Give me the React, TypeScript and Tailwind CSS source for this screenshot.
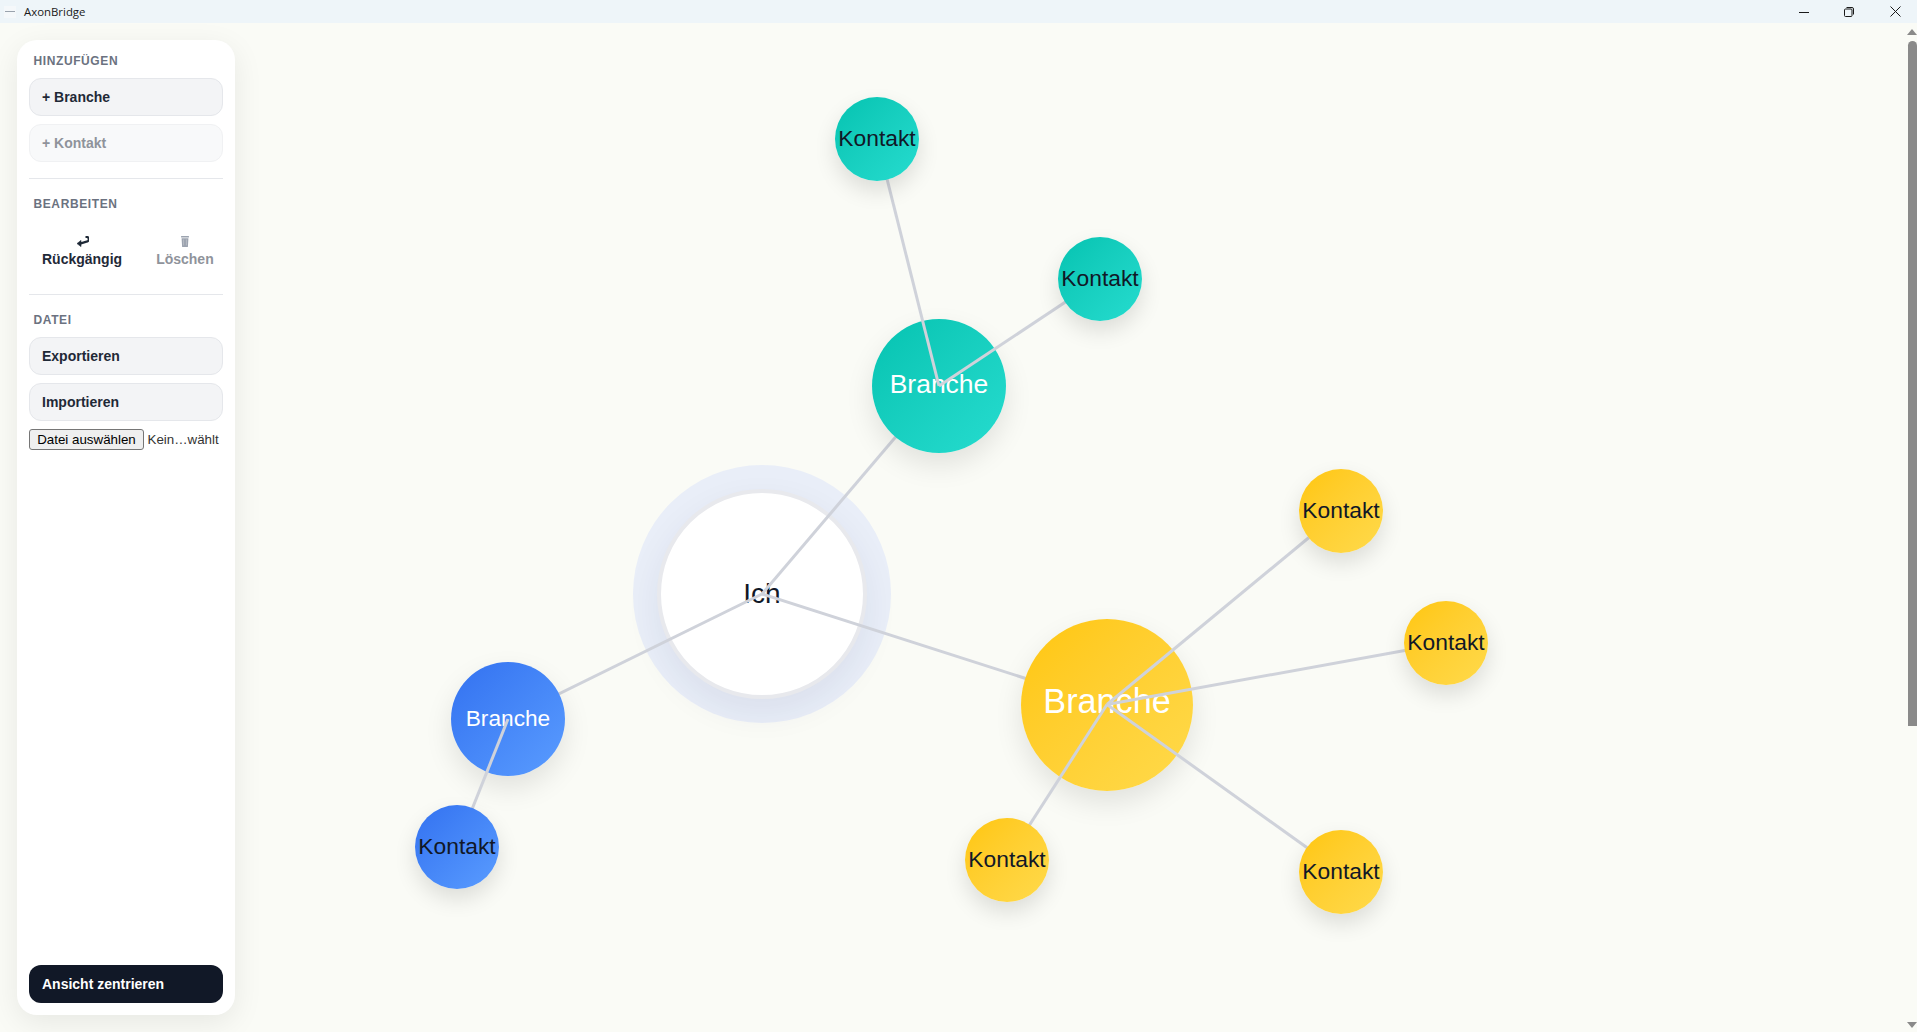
const FONT = "font-['Liberation_Sans',Arial,sans-serif]";

type Kind = "ich" | "branche" | "kontakt";
type Tint = "teal" | "yellow" | "blue";

interface GraphNode {
  id: string;
  label: string;
  kind: Kind;
  tint?: Tint;
  x: number;
  y: number;
  size: number;
  fontSize: number;
  lift: number;
}

const nodes: GraphNode[] = [
  { id: "ich", label: "Ich", kind: "ich", x: 762, y: 594, size: 210, fontSize: 28, lift: 0 },
  { id: "b1", label: "Branche", kind: "branche", tint: "teal", x: 939, y: 386, size: 134, fontSize: 26.5, lift: 2 },
  { id: "b2", label: "Branche", kind: "branche", tint: "yellow", x: 1107, y: 704.5, size: 172, fontSize: 34.2, lift: 6 },
  { id: "b3", label: "Branche", kind: "branche", tint: "blue", x: 508, y: 719, size: 114, fontSize: 22.7, lift: 1 },
  { id: "k1", label: "Kontakt", kind: "kontakt", tint: "teal", x: 877, y: 139, size: 84, fontSize: 22.8, lift: 1 },
  { id: "k2", label: "Kontakt", kind: "kontakt", tint: "teal", x: 1100, y: 279, size: 84, fontSize: 22.8, lift: 1 },
  { id: "k3", label: "Kontakt", kind: "kontakt", tint: "yellow", x: 1341, y: 511, size: 84, fontSize: 22.8, lift: 1 },
  { id: "k4", label: "Kontakt", kind: "kontakt", tint: "yellow", x: 1446, y: 643, size: 84, fontSize: 22.8, lift: 1 },
  { id: "k5", label: "Kontakt", kind: "kontakt", tint: "yellow", x: 1007, y: 860, size: 84, fontSize: 22.8, lift: 1 },
  { id: "k6", label: "Kontakt", kind: "kontakt", tint: "yellow", x: 1341, y: 872, size: 84, fontSize: 22.8, lift: 1 },
  { id: "k7", label: "Kontakt", kind: "kontakt", tint: "blue", x: 457, y: 847, size: 84, fontSize: 22.8, lift: 1 },
];

const branchEdges = [
  ["ich", "b1"],
  ["ich", "b2"],
  ["ich", "b3"],
];

const contactEdges = [
  ["b1", "k1"],
  ["b1", "k2"],
  ["b2", "k3"],
  ["b2", "k4"],
  ["b2", "k5"],
  ["b2", "k6"],
  ["b3", "k7"],
];

const tintClass: Record<Tint, string> = {
  teal: "bg-gradient-to-br from-[#03c3b1] to-[#25dccf]",
  yellow: "bg-gradient-to-br from-[#ffc606] to-[#ffda4a]",
  blue: "bg-gradient-to-br from-[#3371f0] to-[#5a9cff]",
};

function byId(id: string) {
  return nodes.find((n) => n.id === id)!;
}

function EdgeLayer({ edges, layer }: { edges: string[][]; layer: string }) {
  return (
    <svg className={`absolute inset-0 h-full w-full ${layer}`}>
      {edges.map(([a, b]) => (
        <line
          key={a + b}
          x1={byId(a).x}
          y1={byId(a).y}
          x2={byId(b).x}
          y2={byId(b).y}
          stroke="#cfd2da"
          strokeWidth={3}
        />
      ))}
    </svg>
  );
}

function NodeBubble({ node, layer }: { node: GraphNode; layer: string }) {
  const look =
    node.kind === "ich"
      ? "bg-white border-[4px] border-[#e8e9ed] text-[#111827] shadow-[0_14px_34px_rgba(30,41,80,0.07),0_0_0_24px_#e9eef8]"
      : node.kind === "branche"
        ? `${tintClass[node.tint!]} text-white shadow-[0_12px_28px_rgba(0,0,0,0.10)]`
        : `${tintClass[node.tint!]} text-[#111827] shadow-[0_10px_22px_rgba(0,0,0,0.12)]`;

  return (
    <div
      className={`absolute flex items-center justify-center rounded-full ${layer} ${look}`}
      style={{
        left: node.x - node.size / 2,
        top: node.y - node.size / 2,
        width: node.size,
        height: node.size,
        fontSize: node.fontSize,
        paddingBottom: node.lift,
      }}
    >
      {node.label}
    </div>
  );
}

function SectionLabel({ children }: { children: string }) {
  return (
    <div className="mb-[9px] pl-[4.5px] text-[12px] leading-4 font-bold tracking-[0.6px] text-[#6b7280] uppercase">
      {children}
    </div>
  );
}

function SideButton({ children, disabled }: { children: string; disabled?: boolean }) {
  return (
    <button
      className={`h-[38px] w-full rounded-xl border px-[12px] text-left text-[14px] font-bold ${
        disabled
          ? "border-[#f0f1f3] bg-[#f8f9fa] text-[#8f939b]"
          : "border-[#e5e7eb] bg-[#f3f4f6] text-[#1f2937]"
      }`}
    >
      {children}
    </button>
  );
}

function TitleBar() {
  return (
    <div className="flex h-[23px] flex-none items-center bg-[#eef5f9]">
      <div className="ml-[4px] flex h-[12px] w-[12px] items-center justify-center bg-[#f5f8fa]">
        <div className="h-px w-[10px] bg-[#9aa3ad]" />
      </div>
      <span className="ml-[8px] font-['Open_Sans',sans-serif] text-[11.4px] text-[#1a1a1a]">AxonBridge</span>
      <div className="ml-auto flex items-center">
        <svg width="10" height="10" viewBox="0 0 10 10" className="mr-[35px]" stroke="#1a1a1a" fill="none">
          <path d="M0 5.5h10" />
        </svg>
        <svg width="10" height="10" viewBox="0 0 10 10" className="mr-[36px]" stroke="#1a1a1a" fill="none">
          <rect x="0.5" y="2" width="7.5" height="7.5" rx="1" />
          <path d="M2.5 0.5h5.5a1.5 1.5 0 0 1 1.5 1.5v5.5" />
        </svg>
        <svg width="11" height="11" viewBox="0 0 11 11" className="mr-[16px]" stroke="#1a1a1a" fill="none">
          <path d="M0.5 0.5l10 10M10.5 0.5l-10 10" />
        </svg>
      </div>
    </div>
  );
}

function Sidebar() {
  return (
    <aside className="relative z-[60] ml-[17px] flex h-[975px] w-[218px] flex-col rounded-[20px] bg-white px-[12px] pt-[13px] pb-[12px] shadow-[0_8px_30px_rgba(0,0,0,0.08)]">
      <SectionLabel>Hinzufügen</SectionLabel>
      <div className="flex flex-col gap-2">
        <SideButton>+ Branche</SideButton>
        <SideButton disabled>+ Kontakt</SideButton>
      </div>
      <div className="mt-4 mb-[17px] h-px flex-none bg-[#e5e7eb]" />

      <SectionLabel>Bearbeiten</SectionLabel>
      <div className="flex">
        <button className="flex h-[57px] flex-col items-center px-[13px] pt-[11px] text-[14px] font-bold text-[#1f2937]">
          <span className="flex h-[19px] items-center">
            <svg width="13" height="11" viewBox="0 0 13 11" fill="#1f2937" stroke="#1f2937">
              <path d="M9.5 1h1a1.7 1.7 0 0 1 0 4.6 L4 7.6" fill="none" strokeWidth="2.2" />
              <path d="M5 4.4L1 7.6L5 10.6z" strokeWidth="0.6" />
            </svg>
          </span>
          <span className="leading-[17px]">Rückgängig</span>
        </button>
        <button className="ml-[8px] flex h-[57px] flex-col items-center px-[13px] pt-[11px] text-[14px] font-bold text-[#8f939b]">
          <span className="flex h-[19px] items-center">
            <svg width="8" height="11" viewBox="0 0 8 11" fill="#9ca3af">
              <rect x="0" y="0" width="8" height="1.6" rx="0.5" />
              <path d="M0.6 2.2h6.8l-0.5 8.8h-5.8z" />
              <path d="M2.6 3.4v6M5.4 3.4v6" stroke="#c3c7cd" strokeWidth="0.7" />
            </svg>
          </span>
          <span className="leading-[17px]">Löschen</span>
        </button>
      </div>
      <div className="mt-4 mb-[17px] h-px flex-none bg-[#e5e7eb]" />

      <SectionLabel>Datei</SectionLabel>
      <div className="flex flex-col gap-2">
        <SideButton>Exportieren</SideButton>
        <SideButton>Importieren</SideButton>
      </div>
      <div className="mt-2 flex items-center text-[13.33px] leading-none">
        <button className="h-[21px] w-[115px] flex-none rounded-[3px] border border-[#767676] bg-[#efefef] text-black">
          Datei auswählen
        </button>
        <span className="ml-[3.5px] whitespace-nowrap text-[#333]">Kein…wählt</span>
      </div>

      <button className="mt-auto h-[38px] w-full rounded-xl bg-[#111827] px-[13px] text-left text-[14px] font-bold text-white">
        Ansicht zentrieren
      </button>
    </aside>
  );
}

export default function App() {
  return (
    <div className={`flex h-[1032px] w-[1917px] flex-col overflow-hidden bg-[#fafbf6] ${FONT}`}>
      <TitleBar />
      <div className="relative flex-1 pt-[17px]">
        <Sidebar />

        {/* graph coordinates are page coordinates, hence the -23px */}
        <div className="absolute top-[-23px] left-0 h-[1032px] w-[1917px]">
          {nodes
            .filter((n) => n.kind === "ich")
            .map((n) => (
              <NodeBubble key={n.id} node={n} layer="z-10" />
            ))}
          <EdgeLayer edges={branchEdges} layer="z-20" />
          {nodes
            .filter((n) => n.kind === "branche")
            .map((n) => (
              <NodeBubble key={n.id} node={n} layer="z-30" />
            ))}
          <EdgeLayer edges={contactEdges} layer="z-40" />
          {nodes
            .filter((n) => n.kind === "kontakt")
            .map((n) => (
              <NodeBubble key={n.id} node={n} layer="z-50" />
            ))}
        </div>

        {/* scrollbar */}
        <div className="absolute top-0 right-0 bottom-0 z-[60] flex w-[10px] flex-col items-end">
          <svg width="10" height="6" viewBox="0 0 10 6" className="mt-[6px] flex-none" fill="#8a8a8a">
            <path d="M5 0L10 6H0z" />
          </svg>
          <div className="mt-[6px] h-[685px] w-[9px] rounded-t-[5px] bg-[#8a8a8a]" />
          <svg width="10" height="6" viewBox="0 0 10 6" className="mt-auto mb-[4px] flex-none" fill="#8a8a8a">
            <path d="M0 0h10L5 6z" />
          </svg>
        </div>
      </div>
    </div>
  );
}
